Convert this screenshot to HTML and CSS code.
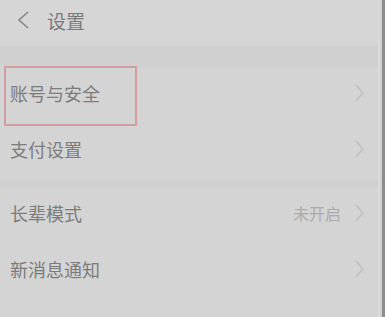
FILE: index.html
```html
<!DOCTYPE html>
<html lang="zh">
<head>
    <meta charset="UTF-8">
    <meta name="viewport" content="width=device-width, initial-scale=1.0">
    <title>设置</title>
    <link rel="stylesheet" href="styles.css">
</head>
<body>
    <div class="screen">
        <div class="app">
            <header class="top-bar">
                <svg class="back-icon" width="14" height="22" viewBox="0 0 14 22">
                    <path d="M12 3 L3 11 L12 19" fill="none" stroke="#858585" stroke-width="1.6"/>
                </svg>
                <h1>设置</h1>
            </header>

            <div class="group group-first">
                <div class="row row-marked">
                    <span class="label">账号与安全</span>
                    <svg class="arrow" width="9" height="18" viewBox="0 0 9 18"><path d="M1 1 L8 9 L1 17" fill="none" stroke="#bdbdbd" stroke-width="1.3"/></svg>
                </div>
                <div class="row">
                    <span class="label">支付设置</span>
                    <svg class="arrow" width="9" height="18" viewBox="0 0 9 18"><path d="M1 1 L8 9 L1 17" fill="none" stroke="#bdbdbd" stroke-width="1.3"/></svg>
                </div>
            </div>

            <div class="group">
                <div class="row">
                    <span class="label">长辈模式</span>
                    <span class="value">未开启</span>
                    <svg class="arrow" width="9" height="18" viewBox="0 0 9 18"><path d="M1 1 L8 9 L1 17" fill="none" stroke="#bdbdbd" stroke-width="1.3"/></svg>
                </div>
                <div class="row">
                    <span class="label">新消息通知</span>
                    <svg class="arrow" width="9" height="18" viewBox="0 0 9 18"><path d="M1 1 L8 9 L1 17" fill="none" stroke="#bdbdbd" stroke-width="1.3"/></svg>
                </div>
                <div class="row">
                    <span class="label">隐私设置</span>
                    <svg class="arrow" width="9" height="18" viewBox="0 0 9 18"><path d="M1 1 L8 9 L1 17" fill="none" stroke="#bdbdbd" stroke-width="1.3"/></svg>
                </div>
            </div>
        </div>
        <div class="edge"></div>
    </div>
</body>
</html>
```

FILE: styles.css
```css
html, body {
    margin: 0;
    height: 100%;
    overflow: hidden;
}

body {
    font-family: "Noto Sans CJK SC", "Noto Sans", sans-serif;
    background-color: #d0d0d0;
}

.screen {
    display: flex;
    height: 100%;
}

.app {
    flex: 1;
    border-right: 2px solid #dadada;
    margin-right: 2px;
}

.edge {
    width: 3px;
    background-color: #8d8d8d;
}

.top-bar {
    height: 46px;
    display: flex;
    align-items: center;
    padding-left: 16px;
    background-color: #d6d6d6;
}

.back-icon {
    display: block;
    margin-bottom: 6px;
}

.top-bar h1 {
    margin: 0 0 6px 17px;
    font-size: 19px;
    font-weight: normal;
    color: #7a7a7a;
}

.group {
    background-color: #d4d4d4;
    margin-top: 8px;
}

.group-first {
    margin-top: 21px;
}

.row {
    height: 56px;
    display: flex;
    align-items: center;
    padding: 0 14px 4px 10px;
    box-sizing: border-box;
    position: relative;
}

.row .label {
    flex: 1;
    font-size: 18px;
    color: #7c7c7c;
}

.row .value {
    font-size: 16px;
    color: #ababab;
    margin-right: 14px;
}

.arrow {
    display: block;
}

/* recuadro rojo de resaltado */
.row-marked::before {
    content: "";
    position: absolute;
    left: 4px;
    top: -1px;
    width: 129px;
    height: 56px;
    border: 2px solid #d09ea1;
    border-radius: 1px;
}
```
